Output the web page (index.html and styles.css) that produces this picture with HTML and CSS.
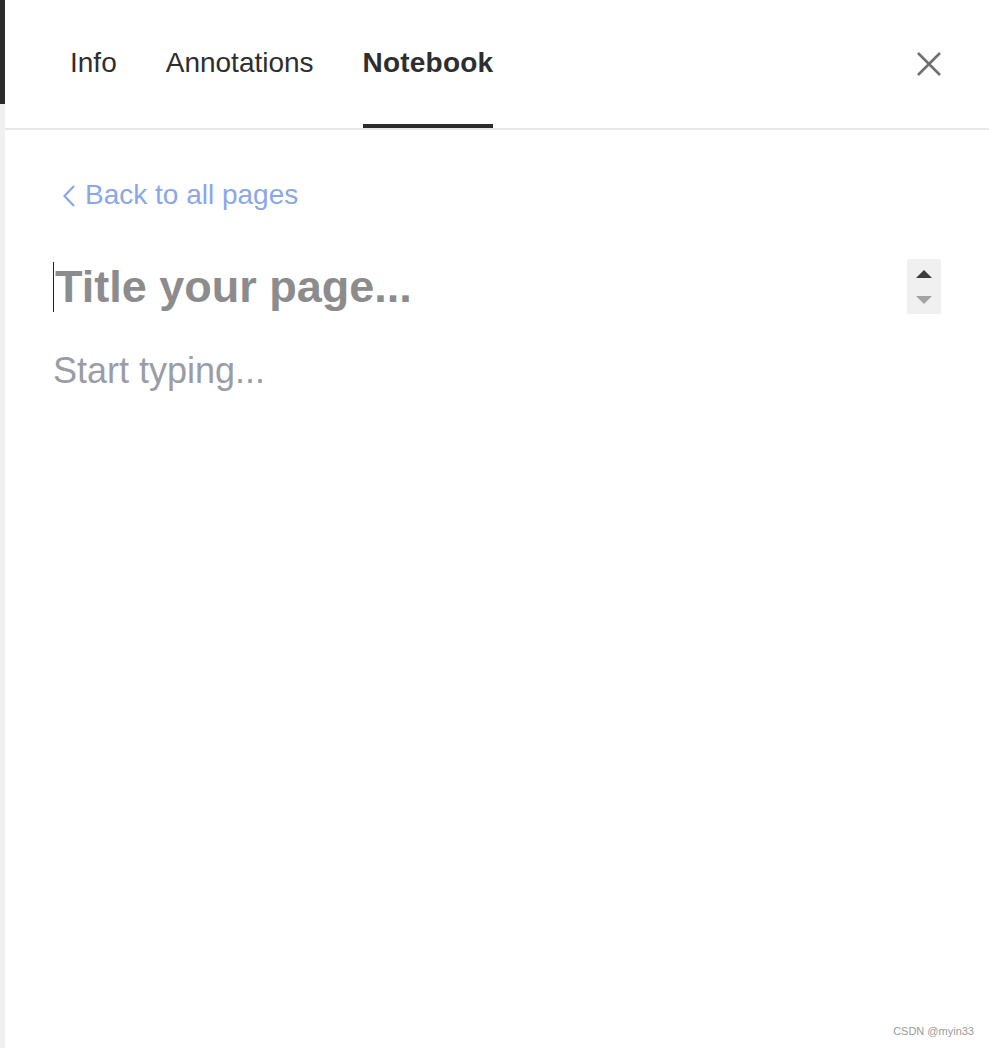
FILE: index.html
```html
<!DOCTYPE html>
<html>
<head>
<meta charset="utf-8">
<link rel="stylesheet" href="styles.css">
</head>
<body>
<div class="app">
  <div class="edge">
    <div class="edge-top"></div>
  </div>
  <div class="panel">
    <header class="header">
      <nav class="tabs">
        <div class="tab">Info</div>
        <div class="tab">Annotations</div>
        <div class="tab active">Notebook</div>
      </nav>
      <button class="close" aria-label="Close">
        <svg width="24" height="24" viewBox="0 0 24 24"><path d="M1 1 L23 23 M23 1 L1 23" stroke="#707070" stroke-width="2.6" fill="none"/></svg>
      </button>
    </header>
    <main class="content">
      <a class="back">
        <svg class="chev" width="12" height="22" viewBox="0 0 12 22"><path d="M11 1 L1.5 11 L11 21" stroke="#8aa7e6" stroke-width="2.2" fill="none"/></svg>
        <span>Back to all pages</span>
      </a>
      <div class="title-row">
        <div class="title"><span class="caret"></span><span class="ph">Title your page...</span></div>
        <div class="spinner">
          <span class="tri up"></span>
          <span class="tri down"></span>
        </div>
      </div>
      <div class="body-ph">Start typing...</div>
    </main>
  </div>
</div>
<div class="watermark">CSDN @myin33</div>
</body>
</html>
```
FILE: styles.css
```css
html, body {
  margin: 0;
  padding: 0;
  background: #ffffff;
  font-family: "Liberation Sans", Arial, sans-serif;
}
.app {
  display: flex;
  min-height: 1048px;
}
.edge {
  width: 5px;
  background: #f0f0f0;
  flex: none;
}
.edge-top {
  height: 104px;
  background: #2b2b2b;
}
.panel {
  flex: 1;
  display: flex;
  flex-direction: column;
}
.header {
  display: flex;
  justify-content: space-between;
  align-items: flex-start;
  height: 130px;
  box-sizing: border-box;
  border-bottom: 2px solid #e8e8e8;
  padding: 0 48px 0 65px;
}
.tabs {
  display: flex;
  gap: 49px;
}
.tab {
  height: 128px;
  box-sizing: border-box;
  padding-top: 47px;
  font-size: 28px;
  line-height: 32px;
  color: #2e2e2e;
  border-bottom: 4px solid transparent;
}
.tab.active {
  font-weight: bold;
  letter-spacing: 0.2px;
  border-bottom-color: #2b2b2b;
}
.close {
  margin-top: 52px;
  padding: 0;
  border: 0;
  background: none;
  width: 24px;
  height: 24px;
  display: block;
}
.close svg { display: block; }
.content {
  padding: 49px 48px 0 48px;
  display: flex;
  flex-direction: column;
}
.back {
  display: flex;
  align-items: center;
  font-size: 28px;
  line-height: 32px;
  color: #8aa7e6;
  height: 32px;
}
.chev {
  margin-left: 10px;
  margin-right: 10px;
  margin-top: 1px;
}
.title-row {
  margin-top: 48px;
  height: 55px;
  display: flex;
  justify-content: space-between;
  align-items: center;
}
.title {
  display: flex;
  align-items: center;
  font-size: 45px;
  line-height: 53px;
  font-weight: bold;
  color: #8c8c8c;
}
.caret {
  width: 1px;
  height: 50px;
  background: #222;
  margin-right: 1px;
}
.spinner {
  width: 34px;
  height: 55px;
  background: #f0f0f0;
  display: flex;
  flex-direction: column;
  align-items: center;
  padding-top: 11px;
  box-sizing: border-box;
}
.tri {
  width: 0;
  height: 0;
  border-left: 8px solid transparent;
  border-right: 8px solid transparent;
}
.tri.up {
  border-bottom: 8px solid #3c3c3c;
}
.tri.down {
  margin-top: 18px;
  border-top: 8px solid #a3a3a3;
}
.body-ph {
  margin-top: 36px;
  font-size: 36px;
  line-height: 41px;
  color: #9a9ca7;
}
.watermark {
  position: absolute;
  right: 15px;
  bottom: 10px;
  font-size: 11px;
  line-height: 13px;
  color: #9a9a9a;
}
```
